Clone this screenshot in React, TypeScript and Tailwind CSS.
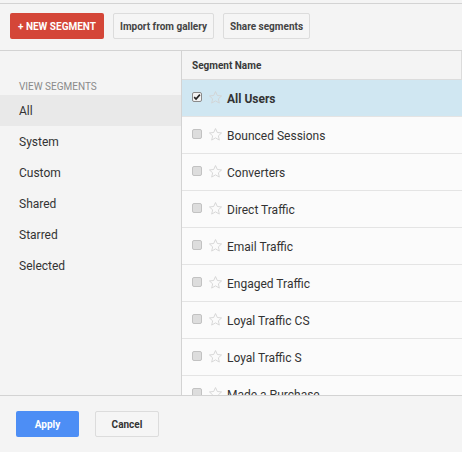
import React from "react";

const segments = [
  "All Users",
  "Bounced Sessions",
  "Converters",
  "Direct Traffic",
  "Email Traffic",
  "Engaged Traffic",
  "Loyal Traffic CS",
  "Loyal Traffic S",
  "Made a Purchase",
];

const views = ["All", "System", "Custom", "Shared", "Starred", "Selected"];

function Star() {
  return (
    <svg width="15" height="15" viewBox="0 0 24 24" className="shrink-0">
      <path
        d="M12 2.5l2.9 6.3 6.8.7-5.1 4.6 1.5 6.8L12 17.4l-6.1 3.5 1.5-6.8-5.1-4.6 6.8-.7z"
        fill="none"
        stroke="#d2d2d2"
        strokeWidth="1.4"
        strokeLinejoin="round"
      />
    </svg>
  );
}

function Check({ on }: { on: boolean }) {
  return (
    <div
      className={
        "w-[10px] h-[10px] rounded-[2px] border shrink-0 flex items-center justify-center " +
        (on ? "border-[#8a8a8a] bg-[#f3f3f3]" : "border-[#c2c2c2] bg-[#dddddd]")
      }
    >
      {on && (
        <svg width="8" height="8" viewBox="0 0 10 10">
          <path d="M1.5 5.2l2.3 2.3L8.6 2" fill="none" stroke="#222" strokeWidth="2" />
        </svg>
      )}
    </div>
  );
}

export default function App() {
  return (
    <div
      className="w-[462px] h-[452px] flex flex-col bg-[#f4f4f4] overflow-hidden"
      style={{ fontFamily: "Roboto, 'Liberation Sans', sans-serif" }}
    >
      <div className="pt-[3px]">
        <div className="h-[48px] border-t border-b border-[#d3d3d3] flex items-start gap-[9px] pl-[10px] pt-[9px]">
          <button className="h-[26px] px-[8px] rounded-[2px] bg-[#d44638] text-white text-[10px] font-bold">
            + NEW SEGMENT
          </button>
          <button className="h-[26px] px-[6px] rounded-[2px] border border-[#dcdcdc] bg-[#f5f5f5] text-[#444] text-[10px] font-bold">
            Import from gallery
          </button>
          <button className="h-[26px] px-[6px] rounded-[2px] border border-[#dcdcdc] bg-[#f5f5f5] text-[#444] text-[10px] font-bold">
            Share segments
          </button>
        </div>
      </div>

      <div className="flex h-[345px] border-b border-[#d3d3d3]">
        <div className="w-[182px] border-r border-[#d3d3d3] flex flex-col pt-[28px]">
          <div className="px-[19px] text-[10px] text-[#8a8a8a] uppercase h-[16px] leading-[16px]">
            View segments
          </div>
          {views.map((v, i) => (
            <div
              key={v}
              className={
                "h-[31px] px-[19px] flex items-center text-[12px] text-[#333] " +
                (i === 0 ? "bg-[#e9e9e9]" : "")
              }
            >
              {v}
            </div>
          ))}
        </div>

        <div className="flex-1 flex flex-col overflow-hidden">
          <div className="h-[29px] shrink-0 border-b border-[#dcdcdc] border-r flex items-center px-[10px] text-[10px] font-bold text-[#3a3a3a]">
            Segment Name
          </div>
          {segments.map((s, i) => (
            <div
              key={s}
              className={
                "h-[37px] shrink-0 border-b border-[#e4e4e4] flex items-center pl-[10px] pt-[2px] text-[12px] text-[#333] " +
                (i === 0 ? "bg-[#d0e7f2] font-bold" : "bg-[#fbfbfb]")
              }
            >
              <span className="-mt-[4px]">
                <Check on={i === 0} />
              </span>
              <span className="ml-[6px] -mt-[4px]">
                <Star />
              </span>
              <span className="ml-[4px]">{s}</span>
            </div>
          ))}
        </div>
      </div>

      <div className="flex items-start gap-[16px] pl-[16px] pt-[15px]">
        <button className="h-[26px] w-[63px] rounded-[2px] bg-[#4d8ef5] text-white text-[10px] font-bold">
          Apply
        </button>
        <button className="h-[26px] w-[64px] rounded-[2px] border border-[#dcdcdc] bg-[#f5f5f5] text-[#333] text-[10px] font-bold">
          Cancel
        </button>
      </div>
    </div>
  );
}
